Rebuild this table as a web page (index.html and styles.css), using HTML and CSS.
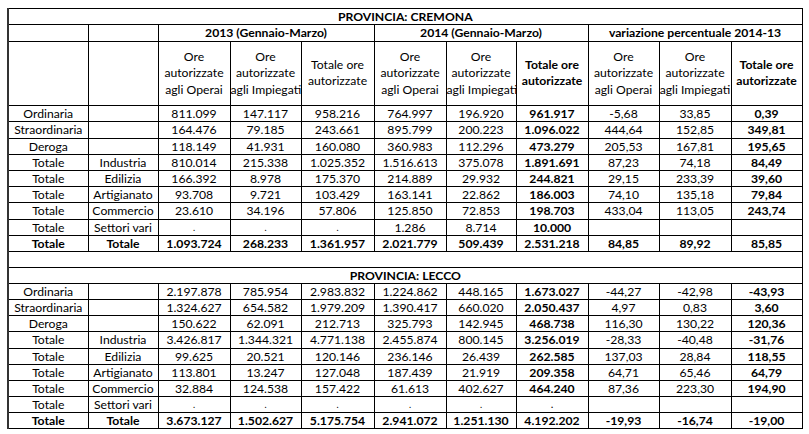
FILE: index.html
```html
<!DOCTYPE html>
<html lang="it">
<head>
    <meta charset="UTF-8">
    <meta name="viewport" content="width=device-width, initial-scale=1.0">
    <title>Cassa integrazione - Cremona e Lecco</title>
    <link rel="stylesheet" href="styles.css">
</head>
<body>

    <table class="report">
        <colgroup>
            <col class="c-label">
            <col class="c-sector">
            <col class="c-72">
            <col class="c-71">
            <col class="c-73">
            <col class="c-72">
            <col class="c-70">
            <col class="c-72">
            <col class="c-71">
            <col class="c-72">
            <col class="c-71">
        </colgroup>

        <tr class="title">
            <td colspan="11">PROVINCIA: CREMONA</td>
        </tr>
        <tr class="group">
            <td></td>
            <td></td>
            <td colspan="3">2013 (Gennaio-Marzo)</td>
            <td colspan="3">2014 (Gennaio-Marzo)</td>
            <td colspan="3">variazione percentuale 2014-13</td>
        </tr>
        <tr class="head">
            <td></td>
            <td></td>
            <td>Ore<br>autorizzate<br>agli Operai</td>
            <td>Ore<br>autorizzate<br>agli Impiegati</td>
            <td>Totale ore<br>autorizzate</td>
            <td>Ore<br>autorizzate<br>agli Operai</td>
            <td>Ore<br>autorizzate<br>agli Impiegati</td>
            <td class="b">Totale ore<br>autorizzate</td>
            <td>Ore<br>autorizzate<br>agli Operai</td>
            <td>Ore<br>autorizzate<br>agli Impiegati</td>
            <td class="b">Totale ore<br>autorizzate</td>
        </tr>

        <!-- Cremona -->
        <tr>
            <td>Ordinaria</td><td></td>
            <td>811.099</td><td>147.117</td><td>958.216</td>
            <td>764.997</td><td>196.920</td><td class="b">961.917</td>
            <td>-5,68</td><td>33,85</td><td class="b">0,39</td>
        </tr>
        <tr>
            <td>Straordinaria</td><td></td>
            <td>164.476</td><td>79.185</td><td>243.661</td>
            <td>895.799</td><td>200.223</td><td class="b">1.096.022</td>
            <td>444,64</td><td>152,85</td><td class="b">349,81</td>
        </tr>
        <tr>
            <td>Deroga</td><td></td>
            <td>118.149</td><td>41.931</td><td>160.080</td>
            <td>360.983</td><td>112.296</td><td class="b">473.279</td>
            <td>205,53</td><td>167,81</td><td class="b">195,65</td>
        </tr>
        <tr>
            <td>Totale</td><td>Industria</td>
            <td>810.014</td><td>215.338</td><td>1.025.352</td>
            <td>1.516.613</td><td>375.078</td><td class="b">1.891.691</td>
            <td>87,23</td><td>74,18</td><td class="b">84,49</td>
        </tr>
        <tr>
            <td>Totale</td><td>Edilizia</td>
            <td>166.392</td><td>8.978</td><td>175.370</td>
            <td>214.889</td><td>29.932</td><td class="b">244.821</td>
            <td>29,15</td><td>233,39</td><td class="b">39,60</td>
        </tr>
        <tr>
            <td>Totale</td><td>Artigianato</td>
            <td>93.708</td><td>9.721</td><td>103.429</td>
            <td>163.141</td><td>22.862</td><td class="b">186.003</td>
            <td>74,10</td><td>135,18</td><td class="b">79,84</td>
        </tr>
        <tr>
            <td>Totale</td><td>Commercio</td>
            <td>23.610</td><td>34.196</td><td>57.806</td>
            <td>125.850</td><td>72.853</td><td class="b">198.703</td>
            <td>433,04</td><td>113,05</td><td class="b">243,74</td>
        </tr>
        <tr>
            <td>Totale</td><td>Settori vari</td>
            <td class="dot">.</td><td class="dot">.</td><td class="dot">.</td>
            <td>1.286</td><td>8.714</td><td class="b">10.000</td>
            <td></td><td></td><td></td>
        </tr>
        <tr class="sum">
            <td>Totale</td><td>Totale</td>
            <td>1.093.724</td><td>268.233</td><td>1.361.957</td>
            <td>2.021.779</td><td>509.439</td><td>2.531.218</td>
            <td>84,85</td><td>89,92</td><td>85,85</td>
        </tr>

        <tr class="gap">
            <td colspan="11"></td>
        </tr>
        <tr class="title">
            <td colspan="11">PROVINCIA: LECCO</td>
        </tr>

        <!-- Lecco -->
        <tr>
            <td>Ordinaria</td><td></td>
            <td>2.197.878</td><td>785.954</td><td>2.983.832</td>
            <td>1.224.862</td><td>448.165</td><td class="b">1.673.027</td>
            <td>-44,27</td><td>-42,98</td><td class="b">-43,93</td>
        </tr>
        <tr>
            <td>Straordinaria</td><td></td>
            <td>1.324.627</td><td>654.582</td><td>1.979.209</td>
            <td>1.390.417</td><td>660.020</td><td class="b">2.050.437</td>
            <td>4,97</td><td>0,83</td><td class="b">3,60</td>
        </tr>
        <tr>
            <td>Deroga</td><td></td>
            <td>150.622</td><td>62.091</td><td>212.713</td>
            <td>325.793</td><td>142.945</td><td class="b">468.738</td>
            <td>116,30</td><td>130,22</td><td class="b">120,36</td>
        </tr>
        <tr>
            <td>Totale</td><td>Industria</td>
            <td>3.426.817</td><td>1.344.321</td><td>4.771.138</td>
            <td>2.455.874</td><td>800.145</td><td class="b">3.256.019</td>
            <td>-28,33</td><td>-40,48</td><td class="b">-31,76</td>
        </tr>
        <tr>
            <td>Totale</td><td>Edilizia</td>
            <td>99.625</td><td>20.521</td><td>120.146</td>
            <td>236.146</td><td>26.439</td><td class="b">262.585</td>
            <td>137,03</td><td>28,84</td><td class="b">118,55</td>
        </tr>
        <tr>
            <td>Totale</td><td>Artigianato</td>
            <td>113.801</td><td>13.247</td><td>127.048</td>
            <td>187.439</td><td>21.919</td><td class="b">209.358</td>
            <td>64,71</td><td>65,46</td><td class="b">64,79</td>
        </tr>
        <tr>
            <td>Totale</td><td>Commercio</td>
            <td>32.884</td><td>124.538</td><td>157.422</td>
            <td>61.613</td><td>402.627</td><td class="b">464.240</td>
            <td>87,36</td><td>223,30</td><td class="b">194,90</td>
        </tr>
        <tr>
            <td>Totale</td><td>Settori vari</td>
            <td class="dot">.</td><td class="dot">.</td><td class="dot">.</td>
            <td class="dot">.</td><td class="dot">.</td><td class="dot b">.</td>
            <td></td><td></td><td></td>
        </tr>
        <tr class="sum">
            <td>Totale</td><td>Totale</td>
            <td>3.673.127</td><td>1.502.627</td><td>5.175.754</td>
            <td>2.941.072</td><td>1.251.130</td><td>4.192.202</td>
            <td>-19,93</td><td>-16,74</td><td>-19,00</td>
        </tr>
    </table>

</body>
</html>
```

FILE: styles.css
```css
body {
    margin: 8px 0 0 7px;
    background: #fff;
    color: #000;
    font-family: Lato, "Liberation Sans", sans-serif;
    font-size: 12.2px;
}
.report {
    border-collapse: collapse;
    table-layout: fixed;
    width: 794px;
    border-left: 2px solid #333;
    border-right: 1px solid #000;
}
.c-label  { width: 80px; }
.c-sector { width: 70px; }
.c-70 { width: 70px; }
.c-71 { width: 71px; }
.c-72 { width: 72px; }
.c-73 { width: 73px; }

.report td {
    border: 1px solid #000;
    padding: 0;
    height: 15.2px;
    line-height: 15px;
    text-align: center;
    white-space: nowrap;
    overflow: hidden;
}
.title td,
.group td,
.sum td,
.report .b {
    font-weight: bold;
}
.group td {
    height: 15.5px;
}
/* header cells with 2-3 lines of text */
.head td {
    height: 63.5px;
    line-height: 16.5px;
}
.gap td {
    height: 14.7px;
}
.dot {
    font-size: 9px;
}
```
